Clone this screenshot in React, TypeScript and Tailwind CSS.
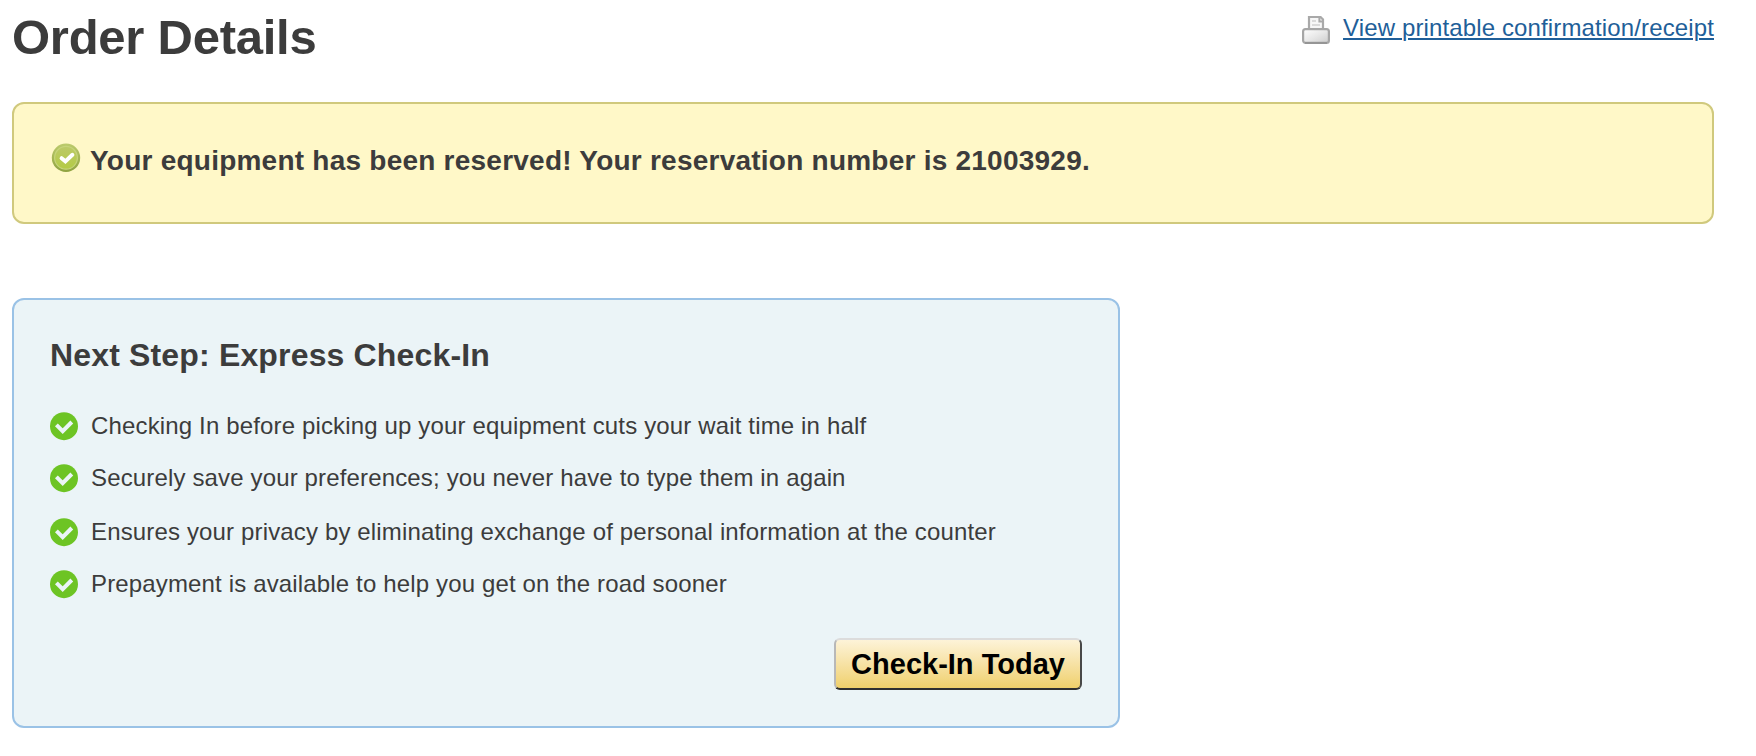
const benefits = [
  { text: "Checking In before picking up your equipment cuts your wait time in half", gap: "mb-[24px]" },
  { text: "Securely save your preferences; you never have to type them in again", gap: "mb-[26px]" },
  { text: "Ensures your privacy by eliminating exchange of personal information at the counter", gap: "mb-[24px]" },
  { text: "Prepayment is available to help you get on the road sooner", gap: "" },
];

function PrinterIcon() {
  return (
    <svg width="28" height="28" viewBox="0 0 28 28" className="shrink-0" aria-hidden="true">
      <defs>
        <linearGradient id="printer-body" x1="0" y1="0" x2="1" y2="1">
          <stop offset="0" stopColor="#ffffff" />
          <stop offset="0.5" stopColor="#e8e8e8" />
          <stop offset="1" stopColor="#cccccc" />
        </linearGradient>
      </defs>
      <path d="M7 14V1H18.5L21 3.5V14Z" fill="#f7f7f7" stroke="#a9a9a9" strokeWidth="2.2" />
      <path d="M17.4 1.5V5.4H21" fill="none" stroke="#a9a9a9" strokeWidth="2" />
      <path d="M10 5H14M10 9H18" stroke="#dadada" strokeWidth="1.8" />
      <rect x="1.1" y="13.1" width="25.8" height="13.8" rx="2.4" fill="url(#printer-body)" stroke="#a6a6a6" strokeWidth="2.2" />
      <path d="M3 27H25" stroke="#959595" strokeWidth="2" />
    </svg>
  );
}

function ReservedIcon() {
  return (
    <svg width="30" height="30" viewBox="0 0 30 30" className="shrink-0" aria-hidden="true">
      <defs>
        <linearGradient id="badge-rim" x1="0" y1="0" x2="0" y2="1">
          <stop offset="0" stopColor="#bccb6c" />
          <stop offset="1" stopColor="#8fa240" />
        </linearGradient>
        <linearGradient id="badge-fill" x1="0" y1="0" x2="0" y2="1">
          <stop offset="0" stopColor="#bcc968" />
          <stop offset="1" stopColor="#b4cb45" />
        </linearGradient>
      </defs>
      <circle cx="15" cy="14.8" r="14.2" fill="url(#badge-rim)" />
      <circle cx="15" cy="14.8" r="11.4" fill="url(#badge-fill)" stroke="#c6d47a" strokeWidth="1.2" />
      <path d="M10.6 15.2L14.4 18.4L21.4 11.8" fill="none" stroke="#ffffff" strokeWidth="4" strokeLinecap="round" />
    </svg>
  );
}

function CheckIcon() {
  return (
    <svg width="28" height="28" viewBox="0 0 28 28" className="shrink-0 overflow-visible" aria-hidden="true">
      <circle cx="14" cy="14.2" r="14" fill="#6dc424" />
      <path d="M6.4 12.9L12.7 19.1L21.8 10" fill="none" stroke="#ebf4f7" strokeWidth="4" />
    </svg>
  );
}

export default function App() {
  return (
    <main className="h-[756px] w-[1756px] overflow-hidden bg-white pl-[12px] pr-[42px] font-['Liberation_Sans',Arial,sans-serif] text-[#3c3c3c]">
      <header className="flex h-[102px] items-start justify-between">
        <h1 className="pt-[9px] text-[49px] leading-[56px] font-bold tracking-[-0.25px]">Order Details</h1>
        <a href="#" className="flex items-start pt-[14px] text-[#1f5f99]">
          <span className="mr-[13px] pt-[2px]">
            <PrinterIcon />
          </span>
          <span className="text-[24px] leading-[28px] tracking-[0.13px] underline decoration-2 underline-offset-[2px]">
            View printable confirmation/receipt
          </span>
        </a>
      </header>

      <section className="flex h-[122px] items-start rounded-[12px] border-2 border-[#d0c97d] bg-[#fff8c8] pt-[39px] pl-[37px]">
        <ReservedIcon />
        <h2 className="ml-[9px] pt-[2px] text-[28px] leading-[32px] font-bold tracking-[0.235px]">
          Your equipment has been reserved! Your reservation number is 21003929.
        </h2>
      </section>

      <section className="mt-[74px] flex h-[430px] w-[1108px] flex-col rounded-[12px] border-2 border-[#9ac2e6] bg-[#ebf4f7] px-[36px] pt-[36px]">
        <h2 className="text-[32px] leading-[38px] font-bold tracking-[0.16px]">Next Step: Express Check-In</h2>
        <ul className="mt-[38px]">
          {benefits.map((b) => (
            <li key={b.text} className={`flex h-[28px] items-start gap-[13px] ${b.gap}`}>
              <CheckIcon />
              <span className="text-[24px] leading-[28px] tracking-[0.15px]">{b.text}</span>
            </li>
          ))}
        </ul>
        <button className="mt-[40px] h-[52px] w-[248px] self-end rounded-[6px] border-2 border-t-[#dcdcdc] border-r-[#484848] border-b-[#303030] border-l-[#b8b8b8] bg-linear-to-b from-[#fdf3d8] to-[#f0d06a] text-[29px] leading-[34px] font-bold whitespace-nowrap text-black">
          Check-In Today
        </button>
      </section>
    </main>
  );
}
